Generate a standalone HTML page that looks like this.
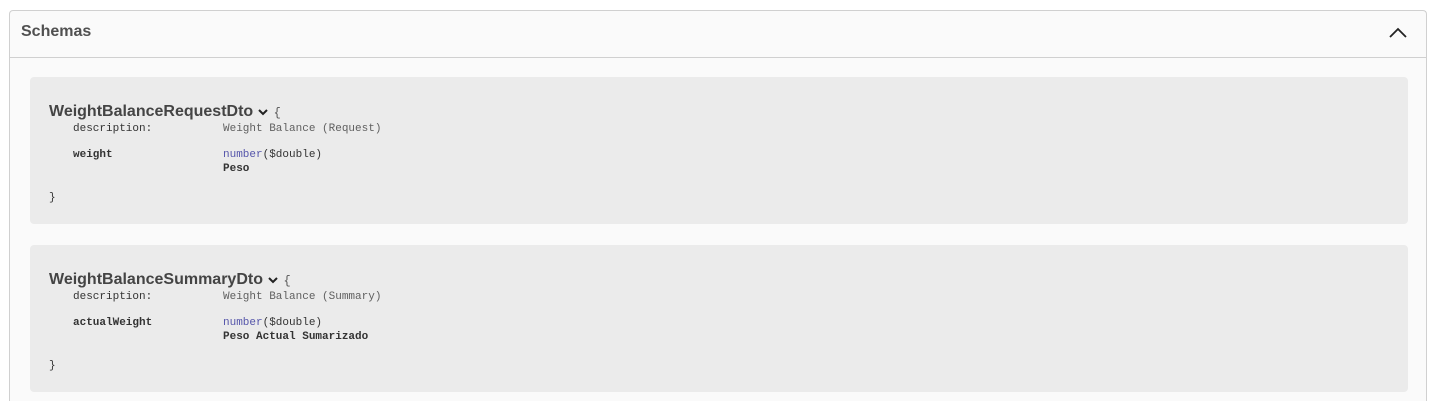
<!DOCTYPE html>
<html style="height:401px;overflow:hidden"><head><style>
body{margin:0;background:#fff;width:1441px;height:401px;overflow:hidden;font-family:"Liberation Sans",sans-serif;position:relative;}
.outer{position:absolute;left:9px;top:10px;width:1418px;height:391px;border:1px solid #d0d0d0;border-bottom:none;border-radius:4px 4px 0 0;background:#fafafa;box-sizing:border-box;}
.hdr{height:46px;border-bottom:1px solid #d0d0d0;position:relative;}
.hdr h4{margin:0;position:absolute;left:11px;top:12px;font-size:16px;font-weight:bold;color:#505050;}
.hdr svg{position:absolute;right:18px;top:14px;}
.model{position:absolute;left:20px;width:1378px;height:147px;background:#ebebeb;border-radius:4px;}
.title{position:absolute;left:19px;top:26px;font-size:16px;font-weight:bold;color:#444;}
.title svg{vertical-align:middle;margin-left:4px}
.brace{font-family:"Liberation Mono",monospace;font-size:12px;font-weight:normal;color:#555;}
.row{position:absolute;font-family:"Liberation Mono",monospace;font-size:11px;color:#333;line-height:14px;}
.k{left:43px}.v{left:193px}
.grey{color:#606060}
.num{color:#55a}
.b{font-weight:bold}
</style></head><body>
<div class="outer">
<div class="hdr"><h4>Schemas</h4>
<svg width="20" height="16" viewBox="0 0 20 16"><path d="M2 12 L10 4 L18 12" fill="none" stroke="#222" stroke-width="1.8"/></svg></div>
<div class="model" style="top:66px">
<div class="title">WeightBalanceRequestDto<svg width="12" height="10" viewBox="0 0 12 10"><path d="M2 3 L6 7 L10 3" fill="none" stroke="#222" stroke-width="2"/></svg> <span class="brace">{</span></div>
<div class="row k" style="top:45px">description:</div>
<div class="row v grey" style="top:45px">Weight Balance (Request)</div>
<div class="row k b" style="top:71px">weight</div>
<div class="row v" style="top:71px"><span class="num">number</span>($double)<br><span class="b">Peso</span></div>
<div class="row" style="left:19px;top:114px">}</div>
</div>
<div class="model" style="top:234px">
<div class="title">WeightBalanceSummaryDto<svg width="12" height="10" viewBox="0 0 12 10"><path d="M2 3 L6 7 L10 3" fill="none" stroke="#222" stroke-width="2"/></svg> <span class="brace">{</span></div>
<div class="row k" style="top:45px">description:</div>
<div class="row v grey" style="top:45px">Weight Balance (Summary)</div>
<div class="row k b" style="top:71px">actualWeight</div>
<div class="row v" style="top:71px"><span class="num">number</span>($double)<br><span class="b">Peso Actual Sumarizado</span></div>
<div class="row" style="left:19px;top:114px">}</div>
</div>
</div>
</body></html>
